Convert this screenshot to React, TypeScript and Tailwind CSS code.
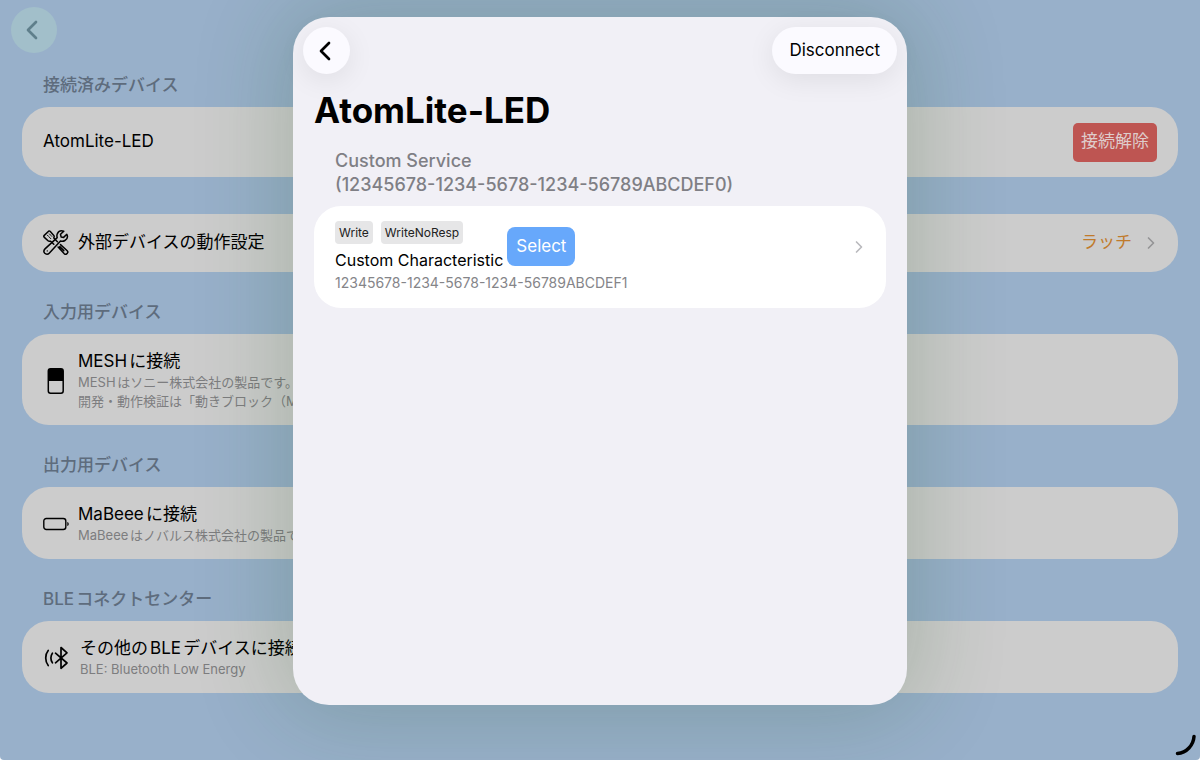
import type { ReactNode } from "react";
import { ChevronLeft, ChevronRight } from "lucide-react";

interface SectionProps {
  title?: string;
  children: ReactNode;
}

interface DeviceRowProps {
  icon: ReactNode;
  title: string;
  notes: string[];
}

const PROPERTIES = ["Write", "WriteNoResp"];

function ToolsIcon() {
  return (
    <svg viewBox="0 0 26 26" className="size-[26px] shrink-0" fill="none" stroke="currentColor" strokeWidth="1.5" strokeLinejoin="round" strokeLinecap="round" aria-hidden="true">
      {/* screwdriver */}
      <path d="M1 5.6 5.6 1.2c.5-.4 1-.4 1.5.1l3.700 4.100c.4.500.5 1 .3 1.500l-.3 1 3.600 3.800M7.600 11.200l3.200 3.100M7.600 11.200l-1.300.1c-.5 0-.9-.2-1.300-.6L1.100 7.100c-.4-.5-.5-1-.1-1.500" />
      <path d="m4.4 5.2 3.4 3.5M6.4 3.9l3 3.1" strokeWidth="1" strokeDasharray="1.2 1" />
      <path d="m17.5 14.6 6.7 6.1c.7.7.8 1.7.2 2.4l-.8.8c-.7.6-1.6.5-2.3-.2l-6.2-6.6M16.8 16.6l4 4" />
      {/* wrench */}
      <path d="M23.8 4.3 20.6 7.4l-2.5-.5-.6-2.6 3.3-3.1c-2.7-.9-5.3.2-6.4 2.4-.7 1.4-.6 2.7-.2 4L2 18.9c-1.3 1.3-1.3 3.2-.2 4.4 1.2 1.2 3.2 1.2 4.4-.1L17.5 11c1.5.4 3.1.3 4.4-.5 2.3-1.3 3.1-3.8 1.9-6.2Z" />
      <circle cx="4.3" cy="20.9" r=".7" fill="currentColor" stroke="none" />
    </svg>
  );
}

function BlockIcon() {
  return (
    <svg viewBox="0 0 26 28" className="w-[26px] h-7 shrink-0" aria-hidden="true">
      <rect x="5.3" y="1.8" width="14.9" height="24.4" rx="2.2" fill="none" stroke="currentColor" strokeWidth="1.5" />
      <path d="M5.5 2H20v12H5.5z" fill="currentColor" />
    </svg>
  );
}

function BatteryIcon() {
  return (
    <svg viewBox="0 0 26 14" className="w-[26px] h-3.5 shrink-0" aria-hidden="true">
      <rect x=".8" y="1.5" width="22" height="11" rx="2.5" fill="none" stroke="currentColor" strokeWidth="1.4" />
      <path d="M24.3 5v4c1.9-.6 1.9-3.4 0-4Z" fill="currentColor" />
    </svg>
  );
}

function BleIcon() {
  return (
    <svg viewBox="0 0 28 26" className="w-7 h-[26px] shrink-0" fill="none" stroke="currentColor" strokeWidth="1.7" strokeLinecap="round" strokeLinejoin="round" aria-hidden="true">
      <path d="m12.500 8.200 11.500 9.800-6 5.300V2.500l6 5.300-11.500 10" />
      <path d="M5.2 5.5c-3.3 4-3.3 11 0 15M9.4 8.2c-2 2.6-2 7 0 9.6" />
    </svg>
  );
}

function Section({ title, children }: SectionProps) {
  return (
    <section>
      {title && <h2 className="pl-[21px] pb-2.5 text-[17px] leading-6 font-medium text-[#5e6c7d]">{title}</h2>}
      <div className="rounded-[27px] bg-[#cccccc] px-[21px]">{children}</div>
    </section>
  );
}

function DeviceRow({ icon, title, notes }: DeviceRowProps) {
  return (
    <button type="button" className="flex w-full items-center gap-[9px] pt-4 pb-3.5 text-left">
      {icon}
      <span className="min-w-0">
        <span className="block text-[17px] leading-[23px] text-black">{title}</span>
        {notes.map(n => (
          <span key={n} className="block text-[13px] leading-[19px] text-[#7d7d7f]">{n}</span>
        ))}
      </span>
    </button>
  );
}

function DeviceList() {
  return (
    <main className="min-h-screen rounded-b-[4px] bg-[#98b0ca] pb-10">
      <header className="px-[11px] pt-[7px] pb-5">
        <button type="button" aria-label="戻る" className="flex size-[46px] items-center justify-center rounded-full bg-[#a2bfca] text-[#5f7f8b]">
          <ChevronLeft className="size-8 -ml-1" strokeWidth={2} />
        </button>
      </header>
      <div className="px-[22px]">
        <Section title="接続済みデバイス">
          <div className="flex h-[70px] items-center justify-between">
            <span className="text-[17px] text-black">AtomLite-LED</span>
            <button type="button" className="h-[39px] rounded-[5px] bg-[#be5552] px-2 text-[17px] text-[#dfcccc]">接続解除</button>
          </div>
        </Section>
        <div className="mt-[37px]">
          <Section>
            <button type="button" className="flex h-[58px] w-full items-center gap-[9px] text-left">
              <ToolsIcon />
              <span className="text-[17px] text-black">外部デバイスの動作設定</span>
              <span className="ml-auto text-[17px] text-[#c07a2b]">ラッチ</span>
              <ChevronRight className="size-5 -mr-1" color="#949496" strokeWidth={2} />
            </button>
          </Section>
        </div>
        <div className="mt-7 space-y-7">
          <Section title="入力用デバイス">
            <DeviceRow
              icon={<BlockIcon />}
              title="MESHに接続"
              notes={["MESHはソニー株式会社の製品です。", "開発・動作検証は「動きブロック（MESH"]}
            />
          </Section>
          <Section title="出力用デバイス">
            <DeviceRow icon={<BatteryIcon />} title="MaBeeeに接続" notes={["MaBeeeはノバルス株式会社の製品です。"]} />
          </Section>
          <Section title="BLEコネクトセンター">
            <DeviceRow icon={<BleIcon />} title="その他のBLEデバイスに接続" notes={["BLE: Bluetooth Low Energy"]} />
          </Section>
        </div>
      </div>
    </main>
  );
}

function ServiceDialog() {
  return (
    <div className="absolute inset-0 flex justify-center overflow-hidden pt-[17px] pb-[55px]">
      <div
        role="dialog"
        aria-labelledby="device-name"
        className="w-full max-w-[614px] rounded-[36px] bg-[#f1f0f6] shadow-[0_0_90px_12px_rgba(30,80,30,0.2)]"
      >
        <header className="flex items-center justify-between px-2.5 pt-2.5">
          <button type="button" aria-label="Back" className="flex size-[47px] items-center justify-center rounded-full bg-[#fbfaff] text-black shadow-[0_6px_28px_rgba(0,0,0,0.08)]">
            <ChevronLeft className="size-8 -ml-1" strokeWidth={2} />
          </button>
          <button type="button" className="h-[47px] rounded-full bg-[#fbfaff] px-[17px] text-[17px] text-black shadow-[0_6px_28px_rgba(0,0,0,0.08)]">
            Disconnect
          </button>
        </header>
        <div className="px-[21px] pt-[15px]">
          <h1 id="device-name" className="text-[35px] leading-[42px] font-bold text-black">AtomLite-LED</h1>
          <h2 className="px-[21px] pt-[18px] pb-[9px] text-lg leading-6 font-medium text-[#7f7f85]">
            Custom Service
            <br />
            (12345678-1234-5678-1234-56789ABCDEF0)
          </h2>
          <div className="rounded-[27px] bg-white pt-[15px] pb-3.5 pr-[17px] pl-[21px]">
            <div className="flex items-center gap-1">
              <div>
                <ul className="flex gap-2">
                  {PROPERTIES.map(p => (
                    <li key={p} className="rounded bg-[#e6e6e7] px-1 text-xs leading-[23px] text-[#222222]">{p}</li>
                  ))}
                </ul>
                <p className="pt-1 text-base leading-6 text-black">Custom Characteristic</p>
              </div>
              <button type="button" className="h-[39px] rounded-lg bg-[#67a8fb] px-[9px] text-[17px] text-white">Select</button>
              <ChevronRight className="ml-auto size-5 shrink-0" color="#b9b9bd" strokeWidth={2} />
            </div>
            <p className="text-sm leading-[22px] text-[#858589]">12345678-1234-5678-1234-56789ABCDEF1</p>
          </div>
        </div>
      </div>
    </div>
  );
}

export default function App() {
  return (
    <div className="relative min-h-screen overflow-hidden bg-white font-['Inter','Noto_Sans_CJK_JP',sans-serif] [text-autospace:normal]" lang="ja">
      <DeviceList />
      <ServiceDialog />
      <svg viewBox="0 0 24 24" className="absolute right-1 bottom-1 size-6" fill="none" stroke="black" strokeWidth="3.5" strokeLinecap="round" aria-hidden="true">
        <path d="M22 4.5C21.5 13 14.5 21 5.5 21.5" />
      </svg>
    </div>
  );
}
